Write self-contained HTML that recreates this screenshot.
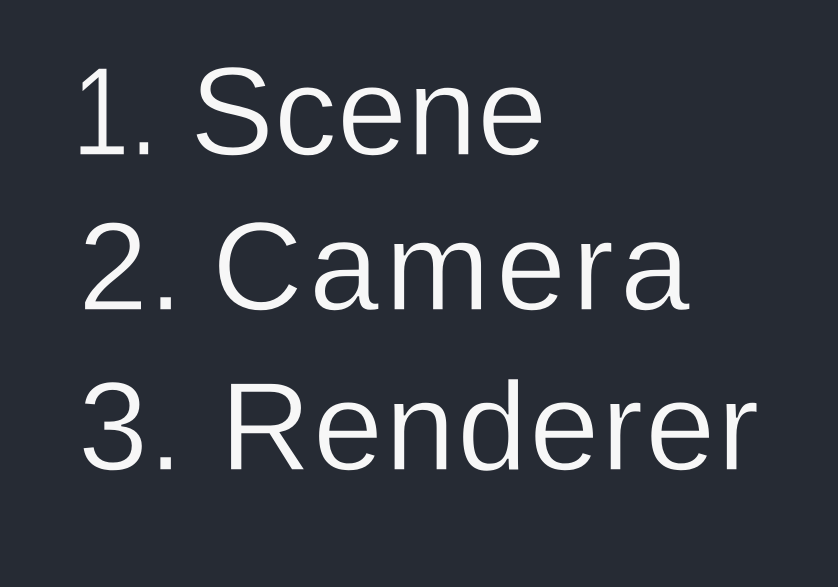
<!DOCTYPE html>
<html><head><meta charset="utf-8"><style>
html,body{margin:0;padding:0;}
body{width:838px;height:587px;background:#262b34;overflow:hidden;position:relative;}
.l{position:absolute;font-family:"Liberation Sans",sans-serif;font-size:126px;line-height:157px;color:#f7f7f7;white-space:nowrap;-webkit-text-stroke:1.5px #262b34;paint-order:fill stroke;}
</style></head><body>
<div class="l" style="top:33px;left:72px;transform:scaleX(0.82);transform-origin:left">1.</div>
<div class="l" style="top:33px;left:190px">Scene</div>
<div class="l" style="top:188px;left:78px">2.</div>
<div class="l" style="top:188px;left:212px;letter-spacing:6px">Camera</div>
<div class="l" style="top:348px;left:78px">3.</div>
<div class="l" style="top:348px;left:220px;letter-spacing:2px">Renderer</div>
</body></html>
